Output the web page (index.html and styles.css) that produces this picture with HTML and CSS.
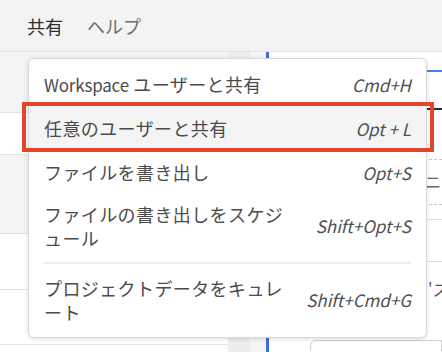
FILE: index.html
```html
<!DOCTYPE html>
<html lang="ja">
<head>
    <meta charset="UTF-8">
    <meta name="viewport" content="width=device-width, initial-scale=1.0">
    <title>共有メニュー</title>
    <link rel="stylesheet" href="styles.css">
</head>
<body>
    <header class="menubar">
        <span class="menubar-item cut">ト</span>
        <span class="menubar-item active">共有</span>
        <span class="menubar-item">ヘルプ</span>
    </header>

    <main class="workspace">
        <div class="sidebar">
            <div class="side-row shaded r1"></div>
            <div class="side-row r2"></div>
            <div class="side-row shaded r3"></div>
            <div class="side-row r4"></div>
            <div class="side-row r5"></div>
        </div>
        <div class="gutter"></div>
        <div class="gutter light"></div>
        <div class="canvas">
            <div class="c-head"></div>
            <div class="c-title"></div>
            <div class="c-dash tall"></div>
            <div class="c-dash text">ニ</div>
            <div class="c-line short"></div>
            <div class="c-line mid"></div>
            <div class="c-note">'ス</div>
            <div class="c-box"></div>
        </div>
    </main>

    <!-- dropdown for 共有 -->
    <ul class="dropdown">
        <li class="item"><span class="label"><span class="latin">Workspace</span> ユーザーと共有</span><span class="key">Cmd+H</span></li>
        <li class="item hover"><span class="label">任意のユーザーと共有</span><span class="key">Opt + L</span></li>
        <li class="item"><span class="label">ファイルを書き出し</span><span class="key">Opt+S</span></li>
        <li class="item multi"><span class="label">ファイルの書き出しをスケジュール</span><span class="key">Shift+Opt+S</span></li>
        <li class="divider"></li>
        <li class="item multi last"><span class="label">プロジェクトデータをキュレート</span><span class="key">Shift+Cmd+G</span></li>
    </ul>
    <div class="callout"></div>
</body>
</html>
```

FILE: styles.css
```css
body { margin: 0; width: 442px; height: 352px; overflow: hidden; position: relative; background: #fff; font-family: "Noto Sans CJK JP", "Noto Sans", sans-serif; color: #4b4b4b; }

.menubar { height: 51px; background: #f3f3f3; border-bottom: 1px solid #e2e2e2; display: flex; align-items: center; gap: 24px; padding-left: 27px; font-size: 18px; overflow: hidden; }
.menubar-item { color: #6f6f6f; line-height: 24px; white-space: nowrap; }
.menubar-item.active { color: #2e2e2e; }
.menubar-item.cut { margin-left: -48px; margin-right: 6px; color: #2e2e2e; }

.workspace { display: flex; height: 300px; overflow: hidden; }
.sidebar { width: 228px; flex: none; }
.side-row { border-bottom: 1px solid #e3e3e3; box-sizing: border-box; }
.side-row.shaded { background: #f4f4f4; }
.r1 { height: 61px; }
.r2 { height: 42px; }
.r3 { height: 79px; }
.r4 { height: 56px; }
.r5 { height: 55px; }
.gutter { width: 22px; background: #ededed; flex: none; }
.gutter.light { width: 16px; background: #f5f5f5; border-right: 3px solid #3b6fd9; }
.canvas { flex: 1; overflow: hidden; }
.c-head { height: 18px; border-bottom: 2px solid #4a7fe0; }
.c-title { height: 36px; border-bottom: 2px solid #2b2b2b; }
.c-dash { border-bottom: 1px dashed #c6c6c6; }
.c-dash.tall { height: 49px; }
.c-dash.text { height: 45px; padding-left: 156px; box-sizing: border-box; font-size: 16px; line-height: 42px; color: #666; }
.c-line { border-bottom: 1px solid #dedede; }
.c-line.short { height: 14px; }
.c-line.mid { height: 41px; }
.c-note { height: 75px; padding-left: 159px; box-sizing: border-box; font-size: 16px; line-height: 54px; color: #555; white-space: nowrap; }
.c-box { margin: 3px 0 0 41px; height: 10px; border: 1px solid #d0d0d0; border-bottom: 0; border-radius: 6px 0 0 0; }

.dropdown { position: absolute; left: 28px; top: 58px; width: 399px; box-sizing: border-box; margin: 0; padding: 3px 0 4px; list-style: none; background: #fff; border: 1px solid #d9d9d9; border-radius: 6px; box-shadow: 0 1px 4px rgba(0, 0, 0, 0.14); }
.item { display: flex; align-items: center; height: 44px; padding: 0 15px; font-size: 18px; letter-spacing: 0.4px; }
.item.hover { background: #f4f4f4; }
.item.multi { height: auto; padding-top: 8px; padding-bottom: 8px; line-height: 24px; }
.item.last { padding-top: 9px; padding-bottom: 9px; }
.label { width: 248px; }
.latin { font-size: 17px; letter-spacing: -0.2px; }
.key { margin-left: auto; font-style: italic; font-size: 17px; letter-spacing: 0; color: #505050; }
.divider { height: 2px; margin: 4px 15px 3px; background: #ececec; }

.callout { position: absolute; left: 22px; top: 102px; width: 412px; height: 50px; box-sizing: border-box; border: 4px solid #e6432b; }
```
